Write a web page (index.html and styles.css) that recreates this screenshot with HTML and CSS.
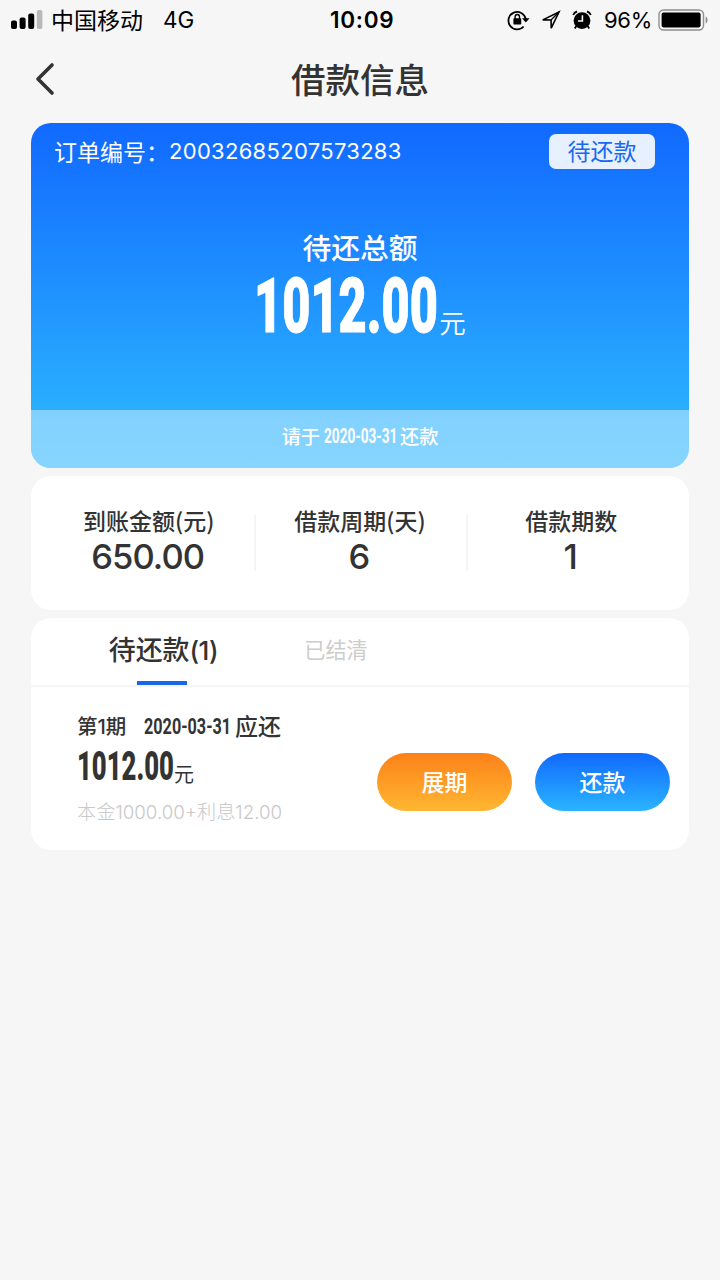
FILE: index.html
```html
<!DOCTYPE html>
<html lang="zh-CN">
<head>
<meta charset="utf-8">
<title>借款信息</title>
<link rel="stylesheet" href="styles.css">
</head>
<body>
<div class="status">
  <svg class="signal" width="32" height="20" viewBox="0 0 32 20">
    <rect x="0" y="10.5" width="6" height="8.5" rx="2"/>
    <rect x="8.6" y="7.5" width="6" height="11.5" rx="2"/>
    <rect x="17.2" y="3.5" width="6" height="15.5" rx="2"/>
    <rect x="25.8" y="0" width="5.6" height="19" rx="2" fill="#b9b9b9"/>
  </svg>
  <span class="carrier">中国移动</span>
  <span class="network">4G</span>
  <span class="clock">10:09</span>
  <span class="status-right">
    <svg class="icon-lock" width="24" height="22" viewBox="0 0 24 22">
      <path d="M16.6 17.5A8.7 8.7 0 1 1 18.7 10" fill="none" stroke="#000" stroke-width="1.8"/>
      <path d="M15 9.2h7.5l-3.7 4.4z"/>
      <rect x="6.4" y="9.3" width="7.8" height="6.2" rx=".8"/>
      <path d="M8.1 10V7.7a2.2 2.2 0 0 1 4.4 0V10" fill="none" stroke="#000" stroke-width="1.4"/>
    </svg>
    <svg class="icon-arrow" width="20" height="20" viewBox="0 0 20 20">
      <path d="M18 2 1.8 9.9l8.3.1.1 8.2z" fill="none" stroke="#000" stroke-width="1.6" stroke-linejoin="miter"/>
      <path d="M18 2 10 10" stroke="#000" stroke-width="1.2"/>
    </svg>
    <svg class="icon-alarm" width="20" height="20" viewBox="0 0 20 20">
      <circle cx="10" cy="10.6" r="8.4"/>
      <path d="M1.2 5A6 6 0 0 1 5 1.5M18.8 5A6 6 0 0 0 15 1.5" fill="none" stroke="#000" stroke-width="1.9"/>
      <path d="M4.3 16 2.8 18.4M15.7 16l1.5 2.4" stroke="#000" stroke-width="1.8"/>
      <path d="M10.4 5.3v5.7H6" fill="none" stroke="#f6f6f6" stroke-width="1.6"/>
    </svg>
    <span class="percent">96%</span>
    <svg class="battery" width="52" height="22" viewBox="0 0 52 22">
      <rect x="1" y="1" width="44.5" height="20" rx="4.5" fill="none" stroke="#8f8f8f" stroke-width="1.4"/>
      <rect x="3.6" y="3.6" width="39" height="14.8" rx="1.8"/>
      <path d="M47.6 7.5c2.6 1 2.6 6 0 7z" fill="#8f8f8f"/>
    </svg>
  </span>
</div>

<header class="navbar">
  <svg class="back" width="22" height="34" viewBox="0 0 22 34">
    <path d="M19 3 5 17 19 31" fill="none" stroke="#333" stroke-width="3.6" stroke-linecap="round" stroke-linejoin="round"/>
  </svg>
  <h1 class="title">借款信息</h1>
</header>

<main class="page">
  <section class="summary">
    <div class="order">
      <span class="order-label">订单编号：</span><span class="order-no">20032685207573283</span>
      <span class="tag">待还款</span>
    </div>
    <div class="total-label">待还总额</div>
    <div class="total">
      <span class="din din-xl"><span>1012.00</span></span><span class="total-unit">元</span>
    </div>
    <div class="due"><span>请于</span><span class="din din-due"><span>2020-03-31</span></span><span>还款</span></div>
  </section>

  <section class="stats">
    <div class="stat"><div class="stat-label">到账金额(元)</div><div class="stat-value">650.00</div></div>
    <div class="stat"><div class="stat-label">借款周期(天)</div><div class="stat-value">6</div></div>
    <div class="stat"><div class="stat-label">借款期数</div><div class="stat-value">1</div></div>
  </section>

  <section class="plan">
    <nav class="tabs">
      <div class="tab active">待还款<span class="count">(1)</span></div>
      <div class="tab">已结清</div>
    </nav>
    <div class="item">
      <div class="info">
        <div class="period"><span class="term">第<span class="term-no">1</span>期</span><span class="din din-date"><span>2020-03-31</span></span><span>应还</span></div>
        <div class="amount"><span class="din din-amount"><span>1012.00</span></span><span class="amount-unit">元</span></div>
        <div class="detail">本金<span class="num">1000.00+</span>利息<span class="num">12.00</span></div>
      </div>
      <div class="actions">
        <div class="btn orange">展期</div>
        <div class="btn blue">还款</div>
      </div>
    </div>
  </section>
</main>
</body>
</html>
```
FILE: styles.css
```css
* { box-sizing: border-box; }
body {
  margin: 0;
  width: 720px;
  height: 1280px;
  overflow: hidden;
  background: #f6f6f6;
  color: #333;
  font-family: Inter, "Noto Sans CJK SC", sans-serif;
}
svg { display: block; flex: none; }

.status {
  display: grid;
  grid-template-columns: 40px 112px 167px 1fr auto;
  align-items: center;
  height: 40px;
  padding: 0 10px 0 11px;
  color: #000;
  line-height: 40px;
}
.carrier { padding-bottom: 2px; font: 23px/38px "Noto Sans CJK SC", sans-serif; }
.network { font-size: 22.5px; }
.clock { font-size: 22.5px; font-weight: 600; letter-spacing: .7px; }
.status-right { display: flex; align-items: center; }
.icon-arrow { margin-left: 10px; }
.icon-alarm { margin-left: 11px; }
.percent { margin-left: 12px; width: 54px; font-size: 22px; letter-spacing: -.3px; }

.navbar { display: flex; align-items: center; height: 83px; padding: 0 33px; }
.back { margin-top: -5px; }
.title {
  flex: 1;
  margin: 0 22px 0 0;
  padding-bottom: 7px;
  text-align: center;
  font: 500 34.5px/50px "Noto Sans CJK SC", sans-serif;
}

.page { display: flex; flex-direction: column; gap: 8px; padding: 0 31px; }

/* Condensed digits: glyphs are squeezed to the width of the holder */
.din { display: inline-block; text-align: left; font-family: Roboto, sans-serif; white-space: nowrap; }
.din > span { display: inline-block; transform-origin: 0 50%; }

.summary {
  display: flex;
  flex-direction: column;
  height: 345px;
  border-radius: 20px;
  overflow: hidden;
  color: #fff;
  background: linear-gradient(#1169ff, #2ab0ff 85%, #2eb8ff);
}
.order { display: flex; align-items: center; height: 56px; padding: 0 34px 0 23px; }
.order-label { width: 115px; font: 23px/34px "Noto Sans CJK SC", sans-serif; white-space: nowrap; }
.order-no { font-size: 22px; letter-spacing: .3px; }
.tag {
  margin-left: auto;
  width: 106px;
  height: 35px;
  border-radius: 7px;
  background: #e7f0ff;
  color: #1768f2;
  text-align: center;
  font: 23px/33px "Noto Sans CJK SC", sans-serif;
}
.total-label { margin-top: 47px; text-align: center; font: 500 28.8px/42px "Noto Sans CJK SC", sans-serif; }
.total { display: flex; justify-content: center; align-items: flex-end; height: 72px; }
.din-xl { width: 185px; font-size: 76px; font-weight: 900; line-height: 68px; -webkit-text-stroke: 1px #fff; }
.din-xl > span { transform: scaleX(.64); }
.total-unit { font: 350 26.5px/36px "Noto Sans CJK SC", sans-serif; }
.due {
  display: flex;
  justify-content: center;
  margin-top: auto;
  height: 58px;
  background: rgba(255, 255, 255, .42);
  font: 500 19.2px/52px "Noto Sans CJK SC", sans-serif;
}
.din-due { width: 73px; margin: 0 3px 0 4px; font-size: 19.5px; font-weight: 700; line-height: 54px; }
.din-due > span { transform: scaleX(.7); }

.stats { display: flex; height: 134px; padding: 27px 12px 0; border-radius: 20px; background: #fff; }
.stat { position: relative; flex: 1; text-align: center; }
.stat + .stat::before {
  content: "";
  position: absolute;
  left: 0;
  top: 12px;
  width: 2px;
  height: 56px;
  background: #f5f5f5;
}
.stat-label { font: 500 23px/34px "Noto Sans CJK SC", sans-serif; }
.stat-value { padding: 1px 2px 0 0; font-size: 34.5px; font-weight: 500; line-height: 38px; letter-spacing: -.9px; }

.plan { height: 232px; border-radius: 20px; background: #fff; }
.tabs { display: flex; height: 69px; padding-left: 52px; border-bottom: 2px solid #f5f5f5; }
.tab {
  width: 160px;
  padding-left: 26px;
  text-align: center;
  color: #ccc;
  font: 400 21.1px/62px "Noto Sans CJK SC", sans-serif;
}
.tab.active {
  position: relative;
  padding-left: 1px;
  color: #333;
  font-size: 26.9px;
  font-weight: 500;
}
.tab.active::after {
  content: "";
  position: absolute;
  left: 54px;
  bottom: 0;
  width: 50px;
  height: 4px;
  background: #1b66e8;
}
.count { font-family: Inter, sans-serif; font-size: 26px; letter-spacing: -.5px; }
.item { display: flex; justify-content: space-between; padding: 22px 19px 0 46px; }
.period { display: flex; height: 32px; font: 500 23px/32px "Noto Sans CJK SC", sans-serif; }
.term { width: 67px; font-size: 20.5px; line-height: 33px; }
.term-no { font-family: Inter, sans-serif; font-size: 20px; }
.din-date { width: 86px; margin-right: 5px; font-size: 22.5px; font-weight: 700; line-height: 34px; }
.din-date > span { transform: scaleX(.72); }
.amount { display: flex; align-items: flex-end; height: 53px; }
.din-amount { width: 97px; font-size: 41px; font-weight: 900; line-height: 55px; }
.din-amount > span { transform: scaleX(.625); }
.amount-unit { font: 400 20px/40px "Noto Sans CJK SC", sans-serif; }
.detail { padding-top: 1px; color: #c8c8c8; font: 300 19.2px/32px "Noto Sans CJK SC", sans-serif; white-space: nowrap; }
.num { font-family: Inter, sans-serif; font-size: 18.7px; }
.actions { display: flex; gap: 23px; padding-top: 44px; }
.btn {
  width: 135px;
  height: 58px;
  border-radius: 29px;
  text-align: center;
  color: #fff;
  font: 500 23px/56px "Noto Sans CJK SC", sans-serif;
}
.orange { background: linear-gradient(#fc8118, #ffb732); }
.blue { background: linear-gradient(#1169ff, #2ab4ff); }
```
